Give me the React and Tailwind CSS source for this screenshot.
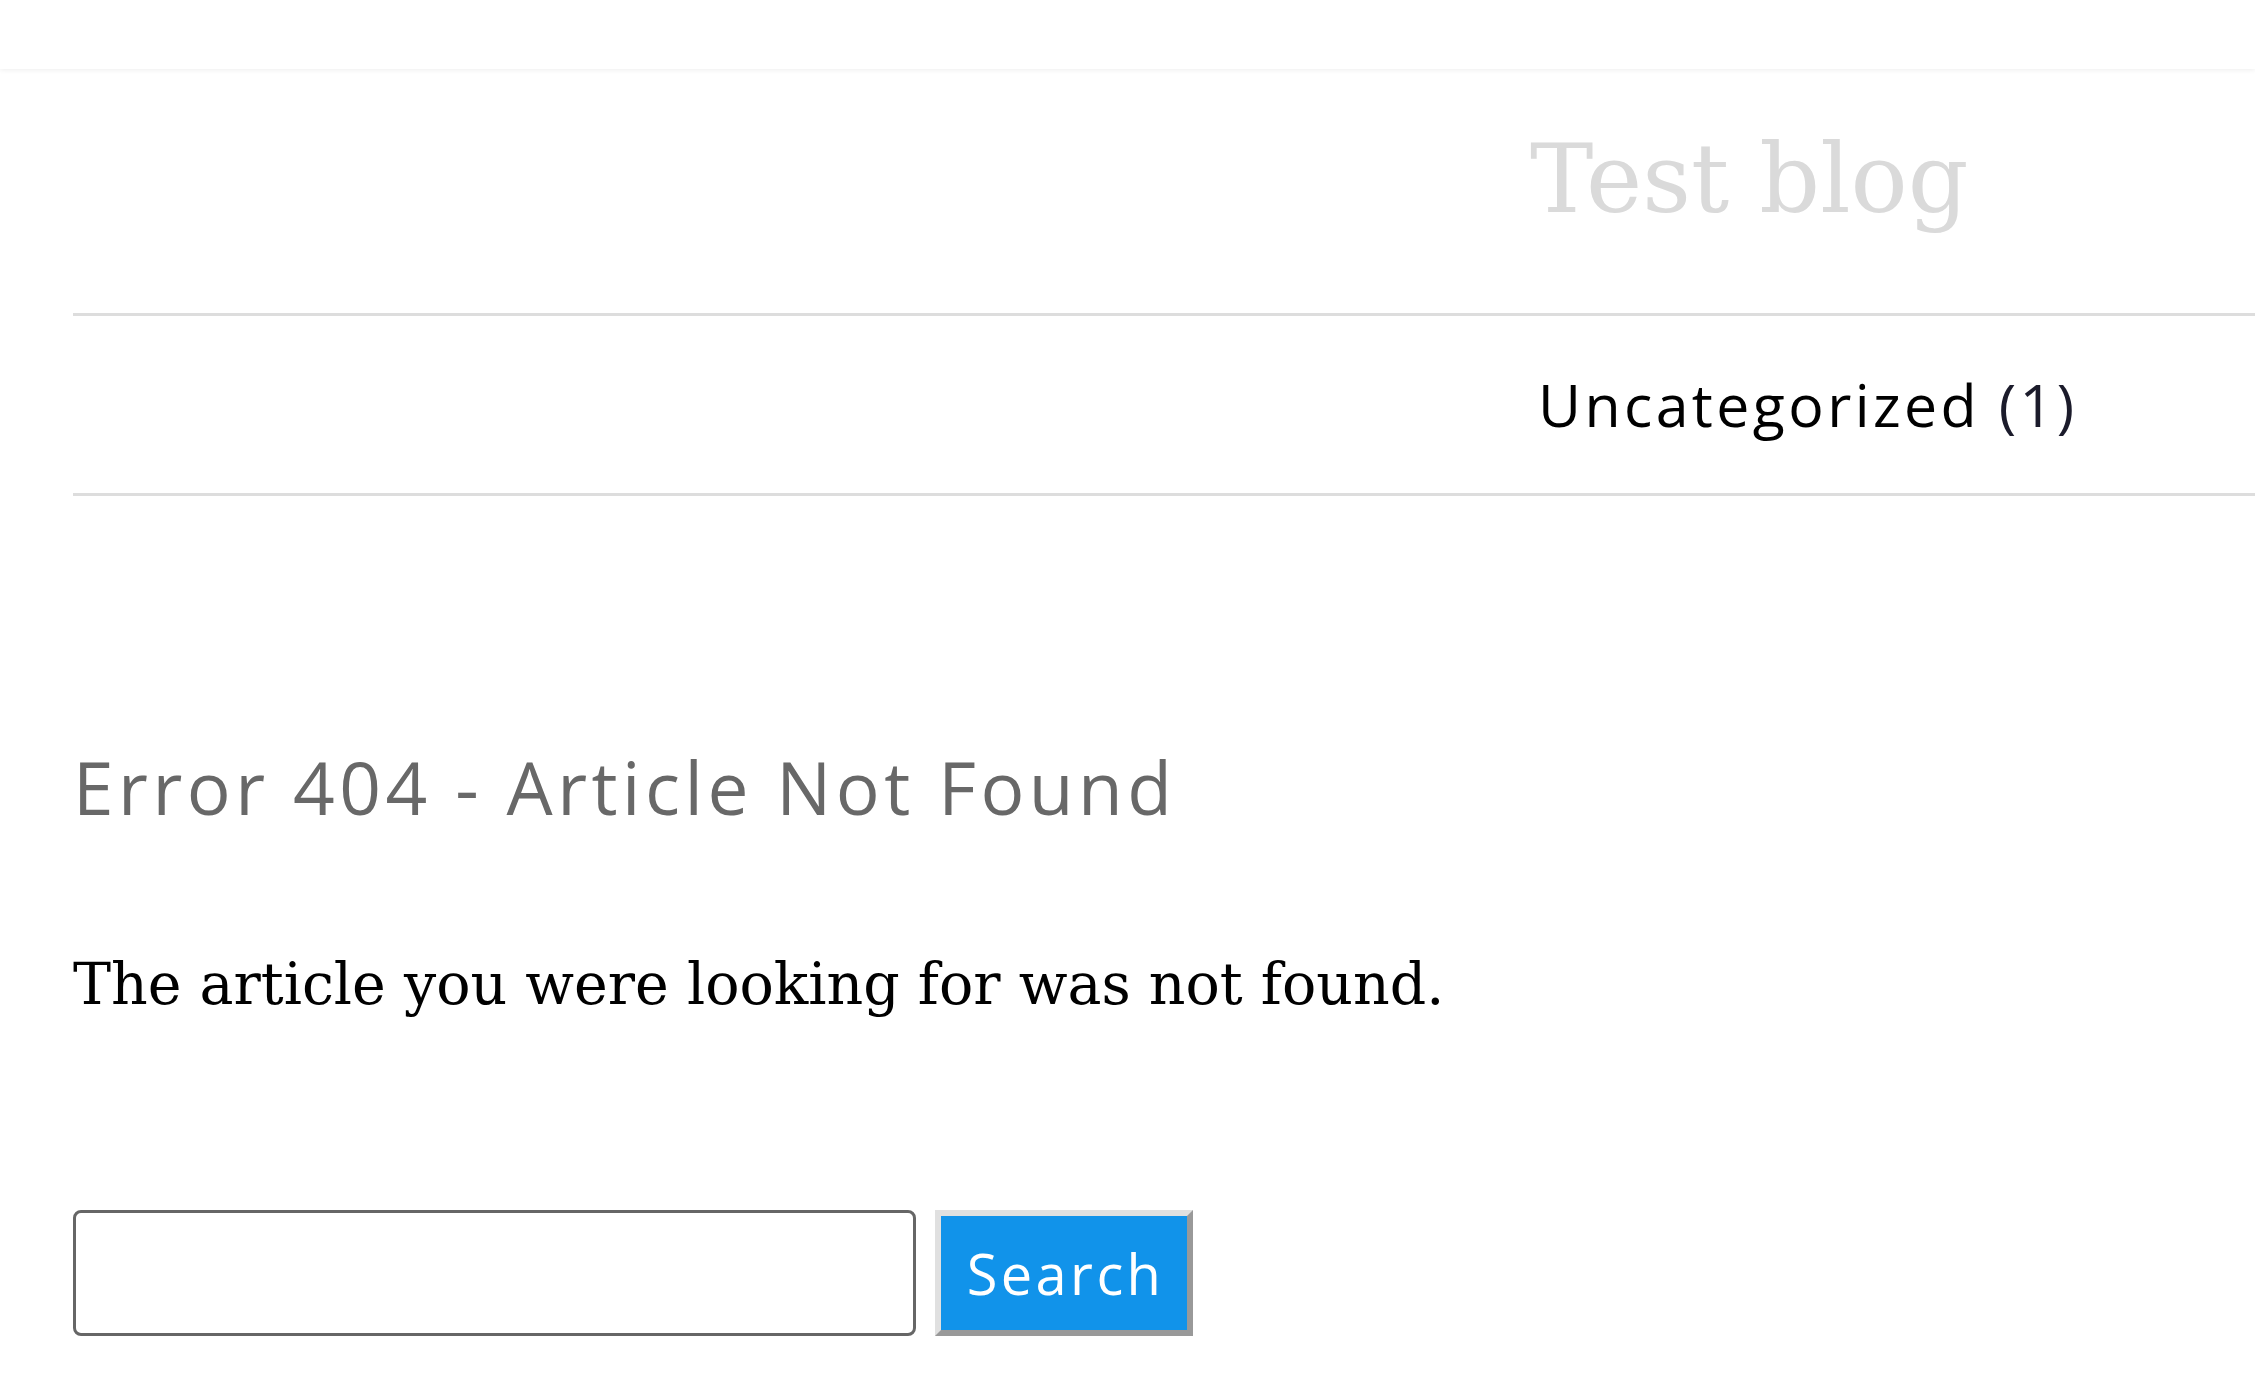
export default function App() {
  const sans = { fontFamily: '"Open Sans", "Noto Sans", sans-serif' };
  const serif = { fontFamily: '"DejaVu Serif", "Liberation Serif", serif' };
  return (
    <div className="min-h-screen bg-white overflow-hidden">
      <header className="h-[69px] bg-white shadow-[0_1px_5px_rgba(0,0,0,0.07)] relative z-10" />
      <div className="pl-[73px]">
        <div className="mt-[63px] mb-[86px] ml-[1457px] whitespace-nowrap">
          <span className="text-[95px] leading-none text-[#dadada]" style={serif}>Test blog</span>
        </div>
        <div className="border-t-[3px] border-b-[3px] border-[#dddddd] py-[59px]">
          <div className="ml-[1465px] whitespace-nowrap text-[59px] leading-none tracking-[3.4px]" style={sans}>
            <span className="text-black">Uncategorized</span>{' '}
            <span className="text-[#1b1b2b]">(1)</span>
          </div>
        </div>
        <h1 className="mt-[254px] text-[73px] leading-none font-normal tracking-[4.5px] text-[#686868] whitespace-nowrap" style={sans}>
          Error 404 - Article Not Found
        </h1>
        <p className="mt-[133px] text-[57px] leading-none text-black whitespace-nowrap" style={serif}>
          The article you were looking for was not found.
        </p>
        <form className="mt-[197px] flex items-start gap-[19px]" onSubmit={(e) => e.preventDefault()}>
          <input
            type="text"
            className="w-[843px] h-[126px] border-[3px] border-[#666666] rounded-[8px] bg-white outline-none"
          />
          <button
            type="submit"
            className="w-[258px] h-[126px] bg-[#1193ea] text-white text-[56px] leading-none tracking-[3.4px] border-[6px] border-t-[#e0e0e0] border-l-[#e0e0e0] border-b-[#999999] border-r-[#999999] flex items-center justify-center pl-[3px]"
            style={sans}
          >
            Search
          </button>
        </form>
      </div>
    </div>
  );
}
